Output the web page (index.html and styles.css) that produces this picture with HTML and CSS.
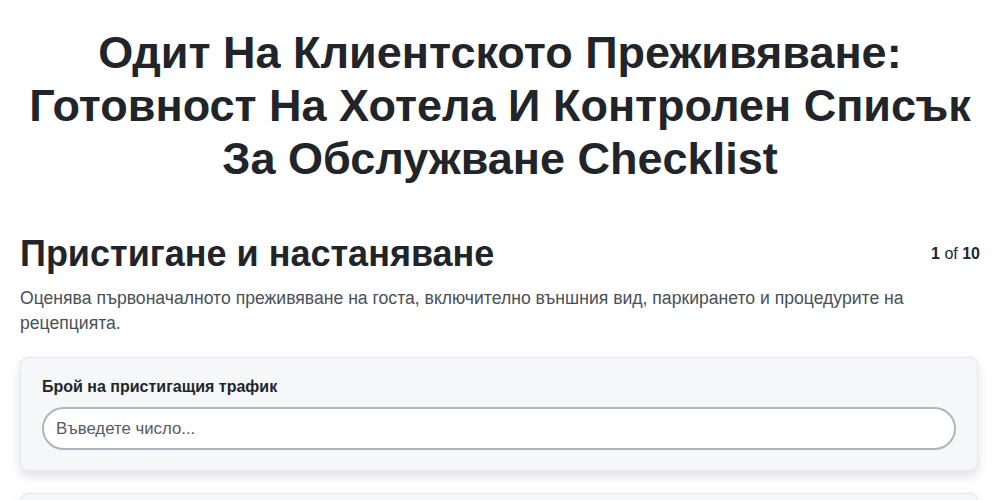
FILE: index.html
```html
<!DOCTYPE html>
<html lang="bg">
  <head>
    <meta charset="UTF-8" />
    <meta name="viewport" content="width=device-width, initial-scale=1.0" />
    <title>Одит На Клиентското Преживяване</title>
    <link rel="stylesheet" href="styles.css">
  </head>
  <body>
    <div class="container">
      <h1>Одит На Клиентското Преживяване: Готовност На Хотела И Контролен Списък За Обслужване Checklist</h1>

      <div class="section-head">
        <h2>Пристигане и настаняване</h2>
        <div class="progress"><b>1</b> of <b>10</b></div>
      </div>
      <p class="section-desc">
        Оценява първоначалното преживяване на госта, включително външния вид, паркирането и процедурите на рецепцията.
      </p>

      <div class="card">
        <label for="traffic">Брой на пристигащия трафик</label>
        <input type="number" id="traffic" placeholder="Въведете число..." />
      </div>

      <div class="card">
        <label for="parking">Наличност на паркоместа</label>
        <input type="number" id="parking" placeholder="Въведете число..." />
      </div>
    </div>
  </body>
</html>
```

FILE: styles.css
```css
body {
  font-family: "Liberation Sans", Arial, sans-serif;
  margin: 0;
  padding: 0;
  background-color: #fff;
  color: #212529;
}
.container {
  padding: 26px 20px 20px;
}
h1 {
  font-size: 45px;
  line-height: 53px;
  text-align: center;
  margin: 0 0 47px;
}
.section-head {
  display: flex;
  justify-content: space-between;
  align-items: center;
}
h2 {
  font-size: 36px;
  margin: 0;
  line-height: 44px;
}
.progress {
  font-size: 16px;
  color: #212529;
}
.section-desc {
  font-size: 17.6px;
  line-height: 25px;
  color: #495057;
  margin: 10px 0 21px;
}
.card {
  background-color: #f6f7f9;
  border: 1px solid #e5e7eb;
  border-radius: 8px;
  box-shadow: 0 5px 12px rgba(0, 0, 0, 0.13);
  padding: 20px 21px 20px;
  margin: 0 2px 22px 0;
}
label {
  display: block;
  font-weight: bold;
  font-size: 16px;
  margin-bottom: 11px;
}
input {
  width: 100%;
  box-sizing: border-box;
  height: 43px;
  padding: 0 12px;
  font-family: inherit;
  font-size: 16.8px;
  border: 2px solid #adb5bd;
  border-radius: 22px;
  background: #fff;
  color: #212529;
}
input::placeholder {
  color: #555b63;
}
```
